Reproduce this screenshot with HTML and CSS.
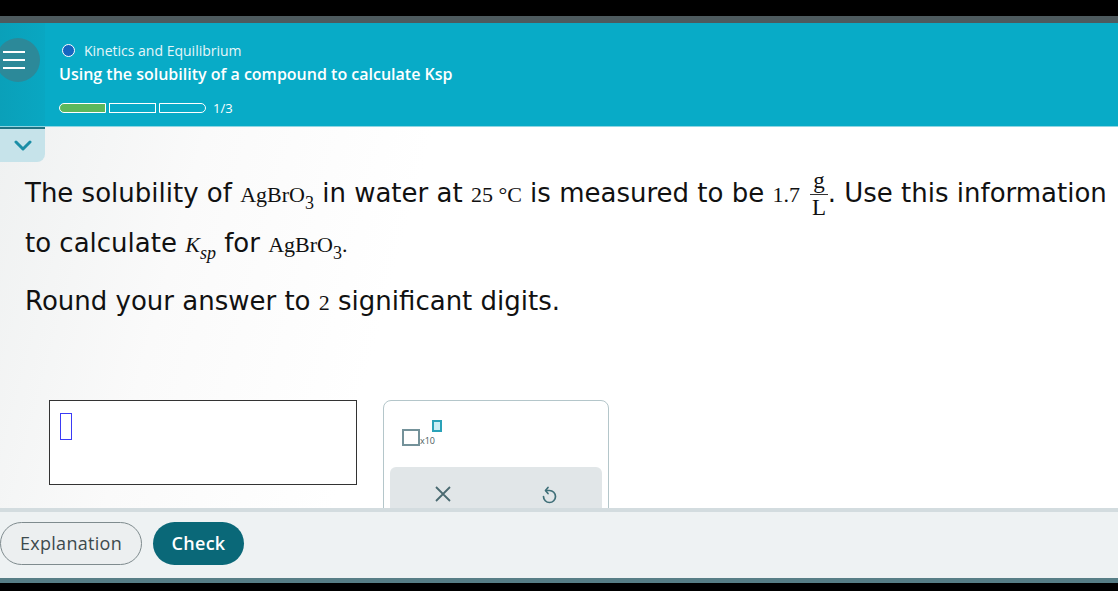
FILE: index.html
```html
<!DOCTYPE html>
<html lang="en">

<head>
  <meta charset="UTF-8">
  <meta name="viewport" content="width=device-width, initial-scale=1.0">
  <title>Using the solubility of a compound to calculate Ksp</title>

  <link rel="stylesheet" href="styles.css">
</head>

<body>
  <div class="topbar"></div>
  <div class="statusbar"></div>

  <header class="header">
    <div class="menu-col">
      <button class="menu">
        <svg width="24" height="20" viewBox="0 0 24 20">
          <path d="M1 2h22M1 10h22M1 18h22" stroke="#fff" stroke-width="2" fill="none"/>
        </svg>
      </button>
    </div>
    <div class="titles">
      <div class="topic"><span class="dot"></span>Kinetics and Equilibrium</div>
      <h1 class="title">Using the solubility of a compound to calculate Ksp</h1>
      <div class="progress">
        <span class="seg first done"></span>
        <span class="seg"></span>
        <span class="seg last"></span>
        <span class="count">1/3</span>
      </div>
    </div>
  </header>

  <main class="main">
    <div class="drawer">
      <svg width="18" height="11" viewBox="0 0 18 11">
        <path d="M2 2l7 7 7-7" stroke="#1b8ea6" stroke-width="3" fill="none" stroke-linecap="round" stroke-linejoin="round"/>
      </svg>
    </div>

    <div class="question">
      <p>The solubility of <span class="m">AgBrO<sub>3</sub></span> in water at <span class="m">25 °C</span> is measured to be <span class="m">1.7</span> <span class="frac"><span class="num">g</span><span class="den">L</span></span>. Use this information to calculate <span class="m"><i>K</i><sub><i>sp</i></sub></span> for <span class="m">AgBrO<sub>3</sub>.</span></p>
      <p>Round your answer to <span class="m">2</span> significant digits.</p>
    </div>

    <div class="answer">
      <div class="answer-box"><span class="cursor"></span></div>
      <div class="keypad">
        <div class="keys">
          <span class="sci">
            <span class="base"></span><span class="x10">x10</span><span class="exp"></span>
          </span>
        </div>
        <div class="actions">
          <svg width="18" height="18" viewBox="0 0 18 18">
            <path d="M2 2l14 14M16 2L2 16" stroke="#4a6a71" stroke-width="1.8" fill="none"/>
          </svg>
          <svg width="18" height="20" viewBox="0 0 18 20">
            <path d="M6 5.5H9.5A6 6 0 1 1 3.5 11.5" stroke="#3f6f78" stroke-width="1.7" fill="none" stroke-linecap="round"/>
            <path d="M8 2.5L5.5 5.5L8 8.5" stroke="#3f6f78" stroke-width="1.7" fill="none" stroke-linecap="round" stroke-linejoin="round"/>
          </svg>
        </div>
      </div>
    </div>
  </main>

  <footer class="footer">
    <button class="btn btn-outline">Explanation</button>
    <button class="btn btn-primary">Check</button>
  </footer>
  <div class="navbar"></div>
  <div class="homebar"></div>
</body>

</html>
```

FILE: styles.css
```css
* {
  margin: 0;
  padding: 0;
  box-sizing: border-box;
}

html,
body {
  width: 1118px;
  height: 591px;
  overflow: hidden;
}

body {
  display: flex;
  flex-direction: column;
  background: #000;
  font-family: "Open Sans", "Lato", sans-serif;
}

.topbar {
  height: 16px;
  background: #000;
}

.statusbar {
  height: 7px;
  background: #4d5a5e;
}

/* header */
.header {
  height: 104px;
  flex-shrink: 0;
  display: flex;
  background: #08abc7;
  border-bottom: 1px solid #8fd6e3;
}

.menu-col {
  width: 45px;
  background: linear-gradient(90deg, #0aa0b9, #09a7c2);
  position: relative;
}

.menu {
  position: absolute;
  left: -4px;
  top: 15px;
  width: 44px;
  height: 44px;
  border-radius: 50%;
  border: none;
  background: #2c8999;
  display: flex;
  align-items: center;
  justify-content: center;
  padding-right: 8px;
}

.titles {
  padding: 18px 0 0 14px;
  color: #fff;
}

.topic {
  display: flex;
  align-items: center;
  font-size: 14px;
  color: #e6f6f9;
  height: 19px;
}

.dot {
  width: 13px;
  height: 13px;
  border-radius: 50%;
  background: #1565c0;
  border: 1.5px solid #fff;
  margin: 0 9px 0 3px;
}

.title {
  font-size: 16px;
  font-weight: 600;
  margin-top: 4px;
  line-height: 20px;
}

.progress {
  display: flex;
  align-items: center;
  margin-top: 15px;
  gap: 3px;
}

.seg {
  width: 47px;
  height: 10px;
  border: 1.5px solid #fff;
}

.seg.first {
  border-radius: 5px 0 0 5px;
}

.seg.last {
  border-radius: 0 5px 5px 0;
}

.seg.done {
  background: #5cb85c;
}

.count {
  font-size: 13px;
  margin-left: 4px;
}

/* content */
.main {
  flex: 1;
  overflow: hidden;
  background: linear-gradient(105deg, #eff1f1 0, #fafafa 200px, #fff 420px);
}

.drawer {
  width: 45px;
  height: 35px;
  background: #c6e3ea;
  border-top: 2px solid #1f7383;
  border-radius: 0 0 8px 0;
  display: flex;
  align-items: center;
  justify-content: center;
}

.question {
  padding: 6px 0 0 25px;
  font-family: "DejaVu Sans", Verdana, sans-serif;
  font-size: 26px;
  color: #111;
}

.question p {
  line-height: 50px;
  margin-bottom: 8px;
}

.m {
  font-family: "Liberation Serif", "Times New Roman", serif;
  font-size: 22px;
  line-height: 1;
}

.m sub {
  font-size: 18px;
  vertical-align: -7px;
  line-height: 0;
}

.frac {
  display: inline-flex;
  flex-direction: column;
  align-items: center;
  vertical-align: middle;
  font-family: "Liberation Serif", serif;
  font-size: 23px;
  margin: -16px 0 -16px 2px;
}

.frac .num {
  border-bottom: 1px solid #333;
  padding: 0 3px;
  line-height: 26px;
}

.frac .den {
  line-height: 26px;
}

/* answer */
.answer {
  display: flex;
  gap: 26px;
  padding-left: 49px;
  margin-top: 74px;
}

.answer-box {
  width: 308px;
  height: 85px;
  background: #fff;
  border: 1px solid #333;
  padding: 12px 0 0 10px;
}

.cursor {
  display: block;
  width: 12px;
  height: 27px;
  border: 1.5px solid #3b3bf5;
}

.keypad {
  width: 226px;
  height: 140px;
  background: #fff;
  border: 1px solid #b4c6ca;
  border-radius: 8px;
  padding: 0 6px;
}

.keys {
  height: 66px;
  padding: 19px 0 0 12px;
}

.sci {
  display: flex;
  align-items: flex-end;
  position: relative;
  height: 26px;
}

.base {
  width: 18px;
  height: 17px;
  border: 2px solid #74929a;
}

.x10 {
  font-size: 9px;
  color: #4a5c60;
  line-height: 11px;
}

.exp {
  position: absolute;
  left: 30px;
  top: 0;
  width: 10px;
  height: 12px;
  background: #c9eef5;
  border: 2px solid #2aa2b8;
}

.actions {
  height: 60px;
  background: #e1e6e8;
  border-radius: 6px;
  display: flex;
  align-items: flex-start;
  justify-content: space-around;
  padding-top: 18px;
}

/* footer */
.footer {
  height: 70px;
  flex-shrink: 0;
  background: #eef2f3;
  border-top: 4px solid #d3dcdf;
  display: flex;
  align-items: center;
  gap: 11px;
  padding-bottom: 4px;
}

.btn {
  height: 43px;
  border-radius: 22px;
  font-family: "Open Sans", "Lato", sans-serif;
  font-size: 18px;
  letter-spacing: 0.3px;
}

.btn-outline {
  width: 142px;
  background: #eceff0;
  border: 1px solid #7f8b8e;
  color: #3d4a4d;
}

.btn-primary {
  width: 91px;
  background: #0a6878;
  border: none;
  color: #fff;
  font-weight: 600;
}

.navbar {
  height: 5px;
  flex-shrink: 0;
  background: #577e86;
}

.homebar {
  height: 8px;
  flex-shrink: 0;
  background: #000;
}
```
